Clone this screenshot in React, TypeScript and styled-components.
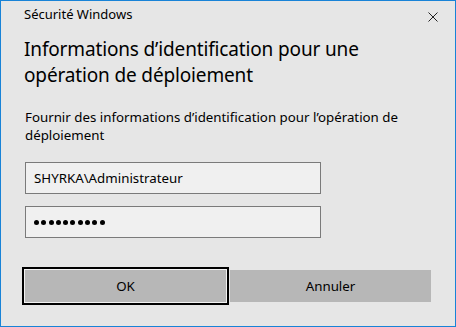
import styled, { createGlobalStyle } from "styled-components";

const GlobalStyle = createGlobalStyle`
  html, body {
    margin: 0;
    padding: 0;
    background: #e6e6e6;
  }
  body {
    font-family: "Noto Sans", "Open Sans", sans-serif;
    color: #000;
  }
`;

const Window = styled.div`
  width: 456px;
  height: 327px;
  box-sizing: border-box;
  border: 1px solid #1883d7;
  background: #e6e6e6;
  display: flex;
  flex-direction: column;
`;

const TitleBar = styled.header`
  display: flex;
  justify-content: space-between;
  align-items: flex-start;
  height: 30px;
  box-sizing: border-box;
  padding: 5px 17px 0 23px;
`;

const Caption = styled.span`
  font-size: 13px;
  line-height: 17px;
  color: #000;
`;

const CloseButton = styled.button`
  display: flex;
  margin-top: 6px;
  padding: 0;
  border: 0;
  background: none;
  width: 10px;
  height: 10px;
`;

const Content = styled.main`
  display: flex;
  flex-direction: column;
  padding: 0 0 0 24px;
`;

const Heading = styled.h1`
  margin: 5px 0 0 -1px;
  font-size: 19px;
  font-weight: 400;
  letter-spacing: -0.15px;
  line-height: 26px;
  color: #000;
`;

const Prompt = styled.p`
  margin: 20px 0 0;
  width: 400px;
  font-size: 13.3px;
  line-height: 18px;
  color: #000;
`;

const Field = styled.div<{ $top: number }>`
  display: flex;
  align-items: center;
  margin-top: ${(p) => p.$top}px;
  width: 296px;
  height: 32px;
  box-sizing: border-box;
  border: 1px solid #7a7a7a;
  background: #f0f0f0;
  padding: 0 8px;
  font-size: 13.3px;
`;

const Dots = styled.div`
  display: flex;
  gap: 2.3px;
`;

const Dot = styled.span`
  width: 5px;
  height: 5px;
  border-radius: 50%;
  background: #000;
`;

const Buttons = styled.div`
  display: flex;
  gap: 4px;
  margin-top: 32px;
`;

const Button = styled.button<{ $focused?: boolean }>`
  width: 201px;
  height: 32px;
  border: 0;
  padding: 0;
  background: #b7b7b7;
  font-family: inherit;
  font-size: 13.3px;
  color: #000;
  box-shadow: ${(p) => (p.$focused ? "0 0 0 1px #f2f2f2, 0 0 0 3px #000" : "none")};
`;

export default function App() {
  return (
    <>
      <GlobalStyle />
      <Window>
        <TitleBar>
          <Caption>Sécurité Windows</Caption>
          <CloseButton aria-label="Fermer">
            <svg width="10" height="10" viewBox="0 0 10 10">
              <path d="M0.5 0.5 L9.5 9.5 M9.5 0.5 L0.5 9.5" stroke="#222" strokeWidth="1" />
            </svg>
          </CloseButton>
        </TitleBar>
        <Content>
          <Heading>
            Informations d’identification pour une
            <br />
            opération de déploiement
          </Heading>
          <Prompt>
            Fournir des informations d’identification pour l’opération de déploiement
          </Prompt>
          <Field $top={18}>SHYRKA\Administrateur</Field>
          <Field $top={12}>
            <Dots>
              {Array.from({ length: 10 }).map((_, i) => (
                <Dot key={i} />
              ))}
            </Dots>
          </Field>
          <Buttons>
            <Button $focused>OK</Button>
            <Button>Annuler</Button>
          </Buttons>
        </Content>
      </Window>
    </>
  );
}
